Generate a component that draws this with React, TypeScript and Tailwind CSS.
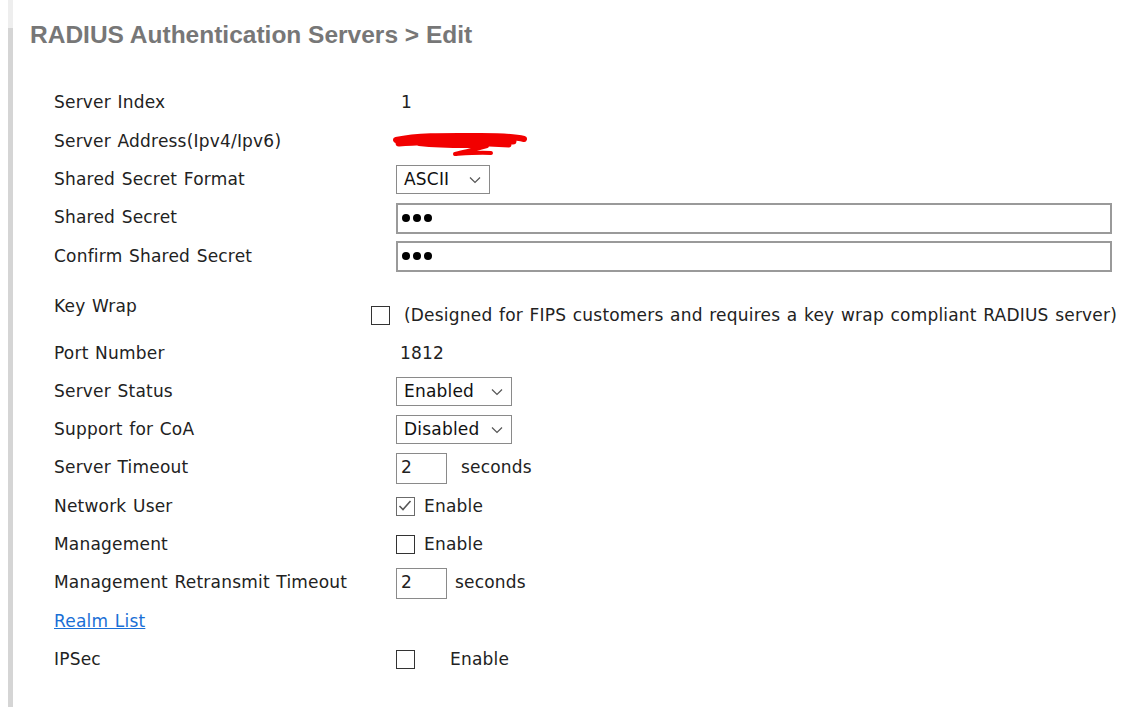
import React from 'react';

const labelFont = {
  fontFamily: '"DejaVu Sans", Verdana, sans-serif',
  letterSpacing: '0.2px',
  wordSpacing: '1px',
};

function Row({ label, children, tall }: { label: React.ReactNode; children?: React.ReactNode; tall?: boolean }) {
  return (
    <div className={tall ? 'flex h-[58.7px]' : 'flex h-[38.3px] items-center'}>
      <div className={tall ? 'w-[342px] shrink-0 pt-[19px]' : 'w-[342px] shrink-0'}>{label}</div>
      <div className={tall ? 'flex h-fit items-center pt-[27px]' : 'flex items-center'}>{children}</div>
    </div>
  );
}

function Chevron() {
  return (
    <svg width="12" height="8" viewBox="0 0 12 8" className="ml-auto">
      <polyline points="1,1.5 6,6.5 11,1.5" fill="none" stroke="#555" strokeWidth="1.2" />
    </svg>
  );
}

function Select({ value, width }: { value: string; width: string }) {
  return (
    <div className={`flex h-[29px] items-center border border-[#8a8a8a] bg-white pl-[7px] pr-[8px] text-[#111] ${width}`}>
      <span>{value}</span>
      <Chevron />
    </div>
  );
}

function Box({ checked }: { checked?: boolean }) {
  return (
    <span
      className={
        checked
          ? 'relative inline-block h-[19px] w-[19px] border-[1.5px] border-[#6b6b6b] bg-white'
          : 'inline-block h-[19px] w-[19px] border-[1.5px] border-[#333] bg-white'
      }
    >
      {checked && (
        <svg width="16" height="16" viewBox="0 0 16 16" className="absolute left-0 top-0">
          <polyline points="2.5,8 6,11.5 13.5,3" fill="none" stroke="#555" strokeWidth="1.6" />
        </svg>
      )}
    </span>
  );
}

function Dots() {
  return (
    <span className="flex gap-[3px] pl-[4px]">
      <span className="h-[8px] w-[8px] rounded-full bg-black" />
      <span className="h-[8px] w-[8px] rounded-full bg-black" />
      <span className="h-[8px] w-[8px] rounded-full bg-black" />
    </span>
  );
}

// hand-drawn red marker over the server address
function Redacted() {
  return (
    <svg width="140" height="30" viewBox="0 0 140 30" className="-ml-[5px] mt-[10px]">
      <g stroke="#f20000" fill="none" strokeLinecap="round" strokeLinejoin="round">
        <path d="M5 9 C30 4 60 5 90 5 C110 5 125 6 133 8" strokeWidth="6" />
        <path d="M8 12 C40 9 80 10 122 10" strokeWidth="7" />
        <path d="M20 7 C50 5 80 6 112 7" strokeWidth="5" />
        <path d="M28 13 C55 16 75 15 96 15 C86 18 76 20 64 23 C78 22 90 21 100 22" strokeWidth="4" />
        <path d="M98 13 L118 14" strokeWidth="5" />
      </g>
    </svg>
  );
}

export default function App() {
  return (
    <div className="flex min-h-[707px] w-[1136px] bg-white" style={labelFont}>
      <div className="ml-[8px] flex w-[5px] flex-col">
        <div className="h-[28px] bg-[#eeeeee]" />
        <div className="flex-1 bg-[#d5d5d5]" />
      </div>
      <div className="flex-1 pl-[17px]">
        <h1
          className="mt-[21px] text-[24.5px] font-bold leading-[28px] tracking-normal text-[#777]"
          style={{ fontFamily: '"Liberation Sans", Arial, sans-serif', wordSpacing: 'normal' }}
        >
          RADIUS Authentication Servers &gt; Edit
        </h1>
        <div className="mt-[35px] pl-[24px] text-[17px] text-[#222]">
          <Row label="Server Index">
            <span className="pl-[5px]">1</span>
          </Row>
          <Row label="Server Address(Ipv4/Ipv6)">
            <Redacted />
          </Row>
          <Row label="Shared Secret Format">
            <Select value="ASCII" width="w-[94px]" />
          </Row>
          <Row label="Shared Secret">
            <div className="flex h-[31px] w-[716px] items-center border-2 border-[#9a9a9a] bg-white">
              <Dots />
            </div>
          </Row>
          <Row label="Confirm Shared Secret">
            <div className="flex h-[31px] w-[716px] items-center border-2 border-[#9a9a9a] bg-white">
              <Dots />
            </div>
          </Row>
          <Row label="Key Wrap" tall>
            <div className="-ml-[25px] flex items-center gap-[14px]">
              <Box />
              <span className="pt-[1px]">(Designed for FIPS customers and requires a key wrap compliant RADIUS server)</span>
            </div>
          </Row>
          <Row label="Port Number">
            <span className="pl-[4px]">1812</span>
          </Row>
          <Row label="Server Status">
            <Select value="Enabled" width="w-[116px]" />
          </Row>
          <Row label="Support for CoA">
            <Select value="Disabled" width="w-[116px]" />
          </Row>
          <Row label="Server Timeout">
            <div className="flex h-[31px] w-[51px] items-center border border-[#8a8a8a] pl-[4px]">2</div>
            <span className="ml-[14px]">seconds</span>
          </Row>
          <Row label="Network User">
            <Box checked />
            <span className="ml-[9px]">Enable</span>
          </Row>
          <Row label="Management">
            <Box />
            <span className="ml-[9px]">Enable</span>
          </Row>
          <Row label="Management Retransmit Timeout">
            <div className="flex h-[31px] w-[51px] items-center border border-[#8a8a8a] pl-[4px]">2</div>
            <span className="ml-[8px]">seconds</span>
          </Row>
          <Row label={<a className="text-[#1a6fd6] underline">Realm List</a>} />
          <Row label="IPSec">
            <Box />
            <span className="ml-[35px]">Enable</span>
          </Row>
        </div>
      </div>
    </div>
  );
}
